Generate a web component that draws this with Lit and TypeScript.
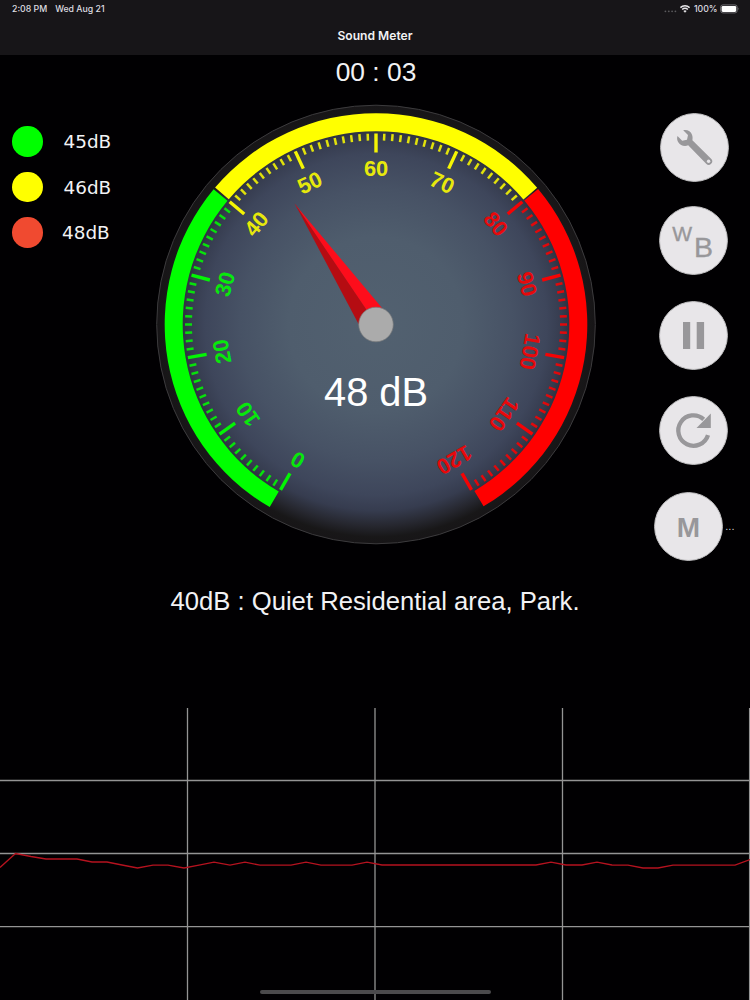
import { LitElement, html, svg, css } from "lit";
import { customElement, property } from "lit/decorators.js";

const GREEN = "#00ff00";
const YELLOW = "#ffff00";
const RED = "#ff0000";

/** Dial angle in degrees (clockwise from 12 o'clock) for a level of 0..120 dB. */
const angleOf = (db: number) => -150 + db * 2.5;

const polar = (r: number, deg: number) => {
  const a = (deg * Math.PI) / 180;
  return `${(r * Math.sin(a)).toFixed(2)} ${(-r * Math.cos(a)).toFixed(2)}`;
};

const band = (from: number, to: number) => {
  const outer = 211.3;
  const inner = 193.3;
  return `M${polar(outer, from)} A${outer} ${outer} 0 0 1 ${polar(outer, to)} L${polar(inner, to)} A${inner} ${inner} 0 0 0 ${polar(inner, from)} Z`;
};

@customElement("sound-gauge")
export class SoundGauge extends LitElement {
  @property({ type: Number }) level = 48;
  @property({ type: Number }) needle = 46.4;

  static styles = css`
    :host { display: block; width: 440px; height: 441px; }
    svg { display: block; }
    .num { font: bold 21.8px "Liberation Sans", Arial, sans-serif; text-anchor: middle; }
    .value { font: 39.8px "Liberation Sans", Arial, sans-serif; text-anchor: middle; fill: #fff; }
  `;

  private tick(db: number) {
    const major = db % 10 === 0;
    const color = db < 40 ? GREEN : db < 80 ? YELLOW : RED;
    return svg`<line x1="0" x2="0" y1="-191" y2=${major ? -172 : -184}
      stroke=${color} stroke-opacity=${major ? 0.95 : 0.85} stroke-width=${major ? 3.4 : 2.5}
      transform="rotate(${angleOf(db)})"></line>`;
  }

  private label(db: number) {
    const color = db < 40 ? GREEN : db < 80 ? YELLOW : RED;
    return svg`<text class="num" fill=${color} fill-opacity="0.9" y="-148.9" transform="rotate(${angleOf(db)})">${db}</text>`;
  }

  render() {
    const all = Array.from({ length: 121 }, (_, i) => i);
    return html`
      <svg width="440" height="441" viewBox="-220 -220.5 440 441">
        <defs>
          <radialGradient id="face" gradientUnits="userSpaceOnUse" cx="0" cy="0" r="219">
            <stop offset="0" stop-color="#526170"></stop>
            <stop offset="0.4" stop-color="#4f5d6d"></stop>
            <stop offset="0.62" stop-color="#475265"></stop>
            <stop offset="0.78" stop-color="#3e465b"></stop>
            <stop offset="0.85" stop-color="#363c4f"></stop>
            <stop offset="0.92" stop-color="#26272f"></stop>
            <stop offset="0.97" stop-color="#181718"></stop>
            <stop offset="1" stop-color="#171517"></stop>
          </radialGradient>
        </defs>
        <circle r="219.3" fill="url(#face)" stroke="#3c3b3d" stroke-width="1"></circle>
        <path d=${band(-149.8, -50.2)} fill=${GREEN}></path>
        <path d=${band(-49.6, 49.7)} fill=${YELLOW}></path>
        <path d=${band(50.1, 149.4)} fill=${RED}></path>
        ${all.map((d) => this.tick(d))}
        ${all.filter((d) => d % 10 === 0).map((d) => this.label(d))}
        <g transform="rotate(${angleOf(this.needle)})">
          <path d="M0 -146 L15.3 0 L0 0 Z" fill="#fd0d1b"></path>
          <path d="M0.3 -146 L0.3 0 L-15.3 0 Z" fill="#b50c12"></path>
        </g>
        <circle r="17.3" fill="#ababab" stroke="#77787a" stroke-width="0.7"></circle>
        <text class="value" x="0" y="81.5">${this.level} dB</text>
      </svg>
    `;
  }
}

@customElement("level-chart")
export class LevelChart extends LitElement {
  static styles = css`
    :host { display: block; height: 292px; }
    svg { display: block; }
  `;

  private points = [
    [0, 159.5], [15.5, 145.5], [31, 148.5], [46, 151], [77, 151], [92, 154], [107, 154],
    [122, 157], [137.5, 160], [153, 157.2], [168, 157.2], [184, 160], [199, 157.2], [214, 154.2],
    [230, 157.2], [245, 154.2], [260, 157.2], [291, 157.2], [306, 154.2], [321, 157.2],
    [352, 157.2], [367, 154.2], [382, 157], [536, 157], [551, 154.2], [566, 157], [582, 157],
    [597, 154.2], [612, 157], [628, 157.2], [643, 160], [658, 160], [673, 157.2], [735, 157.2], [750, 151.5],
  ];

  render() {
    return html`
      <svg width="750" height="292" viewBox="0 0 750 292">
        <g stroke="#949494" stroke-width="1.3">
          ${[187.5, 375, 562.5, 749.6].map((x) => svg`<line x1=${x} x2=${x} y1="0" y2="292"></line>`)}
          ${[72.5, 145.5, 218.6].map((y) => svg`<line x1="0" x2="750" y1=${y} y2=${y}></line>`)}
        </g>
        <polyline points=${this.points.map((p) => p.join(",")).join(" ")} fill="none" stroke="#b5121f" stroke-width="1.3"></polyline>
      </svg>
    `;
  }
}

@customElement("app-root")
export class AppRoot extends LitElement {
  static styles = css`
    :host {
      display: flex; flex-direction: column; width: 750px; height: 1000px;
      background: #010002; color: #f2f2f4; overflow: hidden;
      font-family: "Liberation Sans", Arial, sans-serif;
    }
    header { height: 55px; flex: none; background: #171518; font-family: Inter, sans-serif; }
    .status {
      display: flex; align-items: center; height: 18px; padding: 0 10px 0 12px;
      font-size: 8.75px; font-weight: 500; color: #dedde0;
    }
    .date { margin-left: 8px; }
    .right { margin-left: auto; display: flex; align-items: center; }
    .percent { margin: 0 2.5px 0 4px; }
    .title { text-align: center; font-size: 12.1px; font-weight: 600; line-height: 16px; padding-top: 10px; }
    .timer { height: 49px; flex: none; text-align: center; font-size: 26.4px; line-height: 35px; padding-left: 2px; box-sizing: border-box; }
    .main { display: grid; grid-template-columns: 156px 440px 1fr; height: 464px; flex: none; }
    .legend { padding: 22px 0 0 12px; }
    .item { display: flex; align-items: center; height: 30.5px; margin-bottom: 15px; gap: 21px; font: 18.4px/30px "DejaVu Sans", Verdana, sans-serif; }
    .item span + span { padding-top: 2px; }
    .item:last-child { gap: 19.5px; }
    .dot { width: 30.5px; height: 30.5px; border-radius: 50%; flex: none; }
    .green { background: #00ff00; }
    .yellow { background: #ffff00; }
    .orange { background: #f04a30; }
    .tools { display: flex; flex-direction: column; align-items: flex-start; padding: 8.7px 0 0 63.3px; gap: 26px; }
    .tools svg { display: block; flex: none; }
    .tools .first { margin-left: 0.5px; margin-bottom: -1.7px; }
    .last { display: flex; align-items: center; gap: 2px; margin-left: -5px; margin-top: 0.6px; }
    .more { font-size: 11px; line-height: 12px; color: #cfcfd1; }
    .wb-w { font-size: 21px; }
    .wb-b { font-size: 28.5px; }
    .memo { font-size: 28px; font-weight: bold; }
    .note { flex: none; height: 140px; text-align: center; font-size: 25.65px; line-height: 66px; }
    footer { flex: none; height: 0; display: flex; justify-content: center; }
    .home { width: 231px; height: 4px; border-radius: 2px; background: #4b4a4c; position: relative; top: -10px; flex: none; }
  `;

  private disc(inner: unknown, cls = "") {
    return html`<svg class=${cls} width="69" height="69" viewBox="-34.5 -34.5 69 69">
      <circle r="33.9" fill="#e8e6e9" stroke="#c5c4c6" stroke-width="1"></circle>${inner}
    </svg>`;
  }

  render() {
    return html`
      <header>
        <div class="status">
          <span>2:08 PM</span><span class="date">Wed Aug 21</span>
          <div class="right">
            <svg width="30" height="18" viewBox="0 0 30 18">
              <g fill="#5b5a5d"><circle cx="5.4" cy="11.3" r="0.9"></circle><circle cx="8.8" cy="11.3" r="0.9"></circle><circle cx="12.1" cy="11.3" r="0.9"></circle><circle cx="15.4" cy="11.3" r="0.9"></circle></g>
              <g fill="none" stroke="#e6e5e8" stroke-width="1.5">
                <path d="M20.4 7.6 A6.7 6.7 0 0 1 29.6 7.6"></path>
                <path d="M22.2 9.5 A4 4 0 0 1 27.8 9.5"></path>
              </g>
              <path d="M25 12.8 L23.4 11.1 A2.3 2.3 0 0 1 26.6 11.1 Z" fill="#e6e5e8"></path>
            </svg>
            <span class="percent">100%</span>
            <svg width="20" height="18" viewBox="0 0 20 18">
              <rect x="0.6" y="4.9" width="16.6" height="8" rx="2.3" fill="none" stroke="#77767a" stroke-width="0.9"></rect>
              <rect x="1.6" y="5.9" width="14.6" height="6" rx="1.3" fill="#fff"></rect>
              <path d="M18 7.6 q1.2 1.3 0 2.6z" fill="#77767a"></path>
            </svg>
          </div>
        </div>
        <div class="title">Sound Meter</div>
      </header>
      <div class="timer">00 : 03</div>
      <div class="main">
        <div class="legend">
          <div class="item"><span class="dot green"></span><span>45dB</span></div>
          <div class="item"><span class="dot yellow"></span><span>46dB</span></div>
          <div class="item"><span class="dot orange"></span><span>48dB</span></div>
        </div>
        <sound-gauge></sound-gauge>
        <div class="tools">
          ${this.disc(svg`
            <path d="M-11.3 -17.2 C-7.5 -18.2 -3.6 -16.2 -2.4 -12.6 C-1.7 -10.7 -1.9 -9 -2.1 -7.2 L16.6 11.2 A3.5 3.5 0 0 1 11.7 16.2 L-6.3 -2.2 C-10 -0.6 -14.3 -2 -16.4 -5.5 C-17.5 -7.5 -17.7 -9.4 -17 -11.4 L-12.3 -6.8 L-7.5 -7.8 L-6.5 -12.5 Z" fill="#98979a"></path>
            <circle cx="14.1" cy="13.7" r="1.7" fill="#e8e6e9"></circle>`, "first")}
          ${this.disc(svg`<text class="wb-w" x="-21.3" y="0.9" fill="#98979a" stroke="#98979a" stroke-width="0.4">W</text><text class="wb-b" x="0.6" y="16" fill="#98979a" stroke="#98979a" stroke-width="0.4">B</text>`)}
          ${this.disc(svg`<path d="M-10.5 -13.5h7.2v27h-7.2z M3.2 -13.5h7.4v27h-7.4z" fill="#98979a"></path>`)}
          ${this.disc(svg`<path d="M14.5 4.6 A15.2 15.2 0 1 1 10.2 -11.2" fill="none" stroke="#98979a" stroke-width="4.3"></path>
            <path d="M17.3 -17 V-2.6 H3 Z" fill="#98979a"></path>`)}
          <div class="last">
            ${this.disc(svg`<text class="memo" x="0" y="10.3" text-anchor="middle" fill="#98979a">M</text>`)}
            <span class="more">...</span>
          </div>
        </div>
      </div>
      <div class="note">40dB : Quiet Residential area, Park.</div>
      <level-chart></level-chart>
      <footer><div class="home"></div></footer>
    `;
  }
}
